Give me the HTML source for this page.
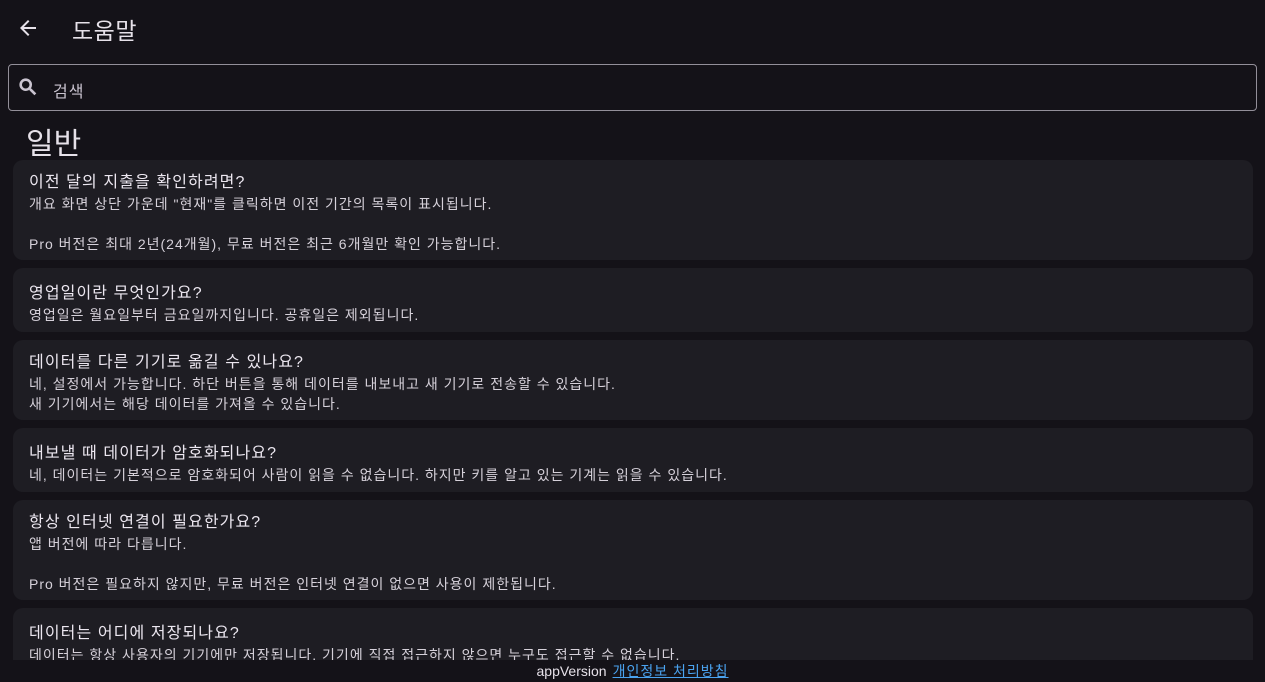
<!DOCTYPE html>
<html><head><meta charset="utf-8"><style>
body{margin:0;width:1265px;height:681px;background:#141218;color:#e6e1e9;font-family:"Liberation Sans","Noto Sans CJK KR",sans-serif;overflow:hidden;position:relative}
.top{position:absolute;left:0;top:0;width:1265px;height:56px}
.title{position:absolute;left:72px;top:12px;font-size:23px;color:#e6e1e9;letter-spacing:0.5px}
.search{position:absolute;left:8px;top:64px;width:1249px;height:47px;border:1px solid #938f99;border-radius:4px;box-sizing:border-box}
.search span{position:absolute;left:44px;top:13px;font-size:16px;color:#cac4d0;letter-spacing:1px}
h1{position:absolute;left:26px;top:119px;margin:0;font-size:30px;font-weight:normal;color:#e6e1e9}
.list{position:absolute;left:13px;top:0;width:1240px;height:660px;overflow:hidden}
.card{position:absolute;left:0;width:1240px;background:#1e1d23;border-radius:10px;padding:11px 16px 8px;box-sizing:border-box}
.q{font-size:16px;line-height:22px;color:#ece7f0;letter-spacing:1.1px}
.a{font-size:14px;line-height:20px;color:#d6d1da;white-space:pre-line;letter-spacing:1px}
.foot{position:absolute;left:0;top:660px;width:1265px;height:21px;text-align:center;font-size:14px;line-height:22px;color:#e6e1e9;background:#141218}
.foot a{color:#4aa3f0;text-decoration:underline;margin-left:6px;letter-spacing:1px}
</style></head><body>
<div class="top">
<svg style="position:absolute;left:16px;top:16px" width="24" height="24" viewBox="0 0 24 24"><path d="M20 11H7.83l5.59-5.59L12 4l-8 8 8 8 1.41-1.41L7.83 13H20v-2z" fill="#e6e1e9"/></svg>
<div class="title">도움말</div></div>
<div class="search">
<svg style="position:absolute;left:8px;top:11px" width="22" height="22" viewBox="0 0 24 24"><path d="M15.5 14h-.79l-.28-.27A6.47 6.47 0 0016 9.5 6.5 6.5 0 109.5 16c1.61 0 3.09-.59 4.23-1.57l.27.28v.79l5 4.99L20.49 19l-4.99-5zm-6 0C7.01 14 5 11.99 5 9.5S7.01 5 9.5 5 14 7.01 14 9.5 11.99 14 9.5 14z" fill="#cac4d0" stroke="#cac4d0" stroke-width="0.8"/></svg>
<span>검색</span></div>
<h1>일반</h1>
<div class="list">
<div class="card" style="top:160px;height:100px;padding-top:12px"><div class="q">이전 달의 지출을 확인하려면?</div><div class="a">개요 화면 상단 가운데 "현재"를 클릭하면 이전 기간의 목록이 표시됩니다.

Pro 버전은 최대 2년(24개월), 무료 버전은 최근 6개월만 확인 가능합니다.</div></div>
<div class="card" style="top:268px;height:64px;padding-top:15px"><div class="q">영업일이란 무엇인가요?</div><div class="a">영업일은 월요일부터 금요일까지입니다. 공휴일은 제외됩니다.</div></div>
<div class="card" style="top:340px;height:80px;padding-top:12px"><div class="q">데이터를 다른 기기로 옮길 수 있나요?</div><div class="a">네, 설정에서 가능합니다. 하단 버튼을 통해 데이터를 내보내고 새 기기로 전송할 수 있습니다.
새 기기에서는 해당 데이터를 가져올 수 있습니다.</div></div>
<div class="card" style="top:428px;height:64px;padding-top:15px"><div class="q">내보낼 때 데이터가 암호화되나요?</div><div class="a">네, 데이터는 기본적으로 암호화되어 사람이 읽을 수 없습니다. 하지만 키를 알고 있는 기계는 읽을 수 있습니다.</div></div>
<div class="card" style="top:500px;height:100px;padding-top:12px"><div class="q">항상 인터넷 연결이 필요한가요?</div><div class="a">앱 버전에 따라 다릅니다.

Pro 버전은 필요하지 않지만, 무료 버전은 인터넷 연결이 없으면 사용이 제한됩니다.</div></div>
<div class="card" style="top:608px;height:80px;padding-top:15px"><div class="q">데이터는 어디에 저장되나요?</div><div class="a">데이터는 항상 사용자의 기기에만 저장됩니다. 기기에 직접 접근하지 않으면 누구도 접근할 수 없습니다.</div></div>
</div>
<div class="foot">appVersion<a>개인정보 처리방침</a></div>
</body></html>
